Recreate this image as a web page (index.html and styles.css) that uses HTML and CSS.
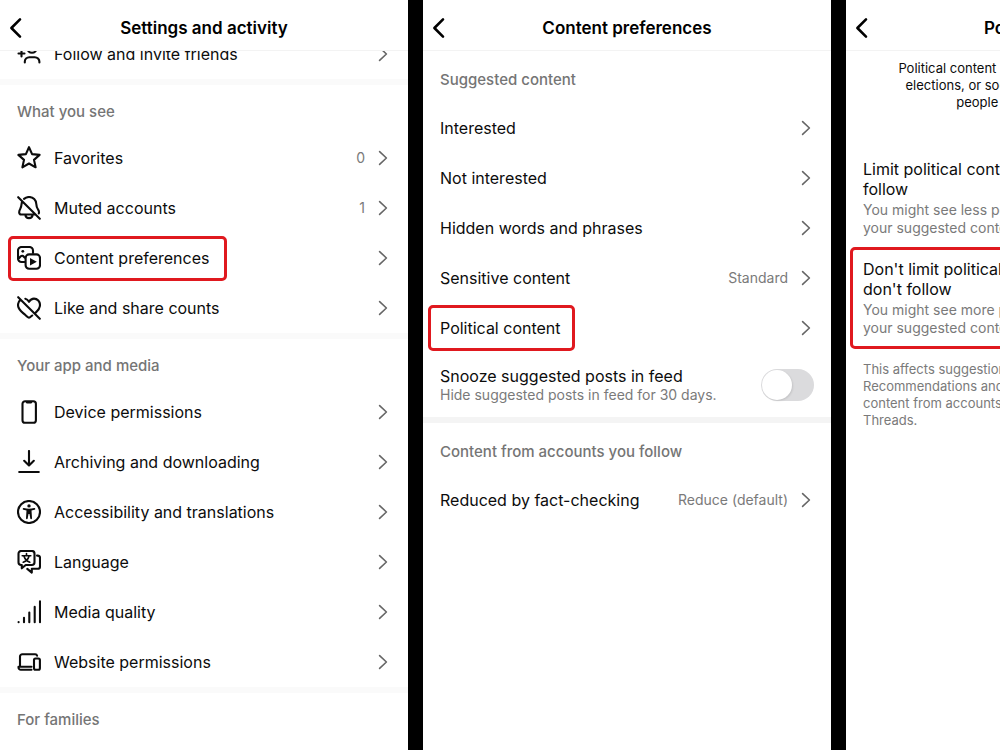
FILE: index.html
```html
<!DOCTYPE html>
<html lang="en">
<head>
    <meta charset="UTF-8">
    <meta name="viewport" content="width=device-width, initial-scale=1.0">
    <title>Settings and activity</title>
    <link rel="stylesheet" href="styles.css">
</head>
<body>

    <!-- Shared chevrons -->
    <svg class="sprite" aria-hidden="true">
        <symbol id="chevron" viewBox="0 0 16 16">
            <path d="M4.6 1.6 11.4 8l-6.8 6.4"/>
        </symbol>
        <symbol id="back" viewBox="0 0 14 22">
            <path d="M12 2.4 3.4 11l8.600 8.600"/>
        </symbol>
    </svg>

    <div class="screens">

        <!-- Settings and activity -->
        <section class="screen">
            <header class="top-bar">
                <button class="back-button" aria-label="Back"><svg><use href="#back"/></svg></button>
                <h1>Settings and activity</h1>
            </header>
            <div class="scroll-area">
                <ul class="list scrolled">
                    <li><a class="row" href="#invite">
                        <span class="row-main">
                            <svg class="icon" viewBox="0 0 24 24"><circle cx="15" cy="6.2" r="4.6"/><path d="M7.800 20.500v-.7a4.600 4.600 0 0 1 4.600-4.600h5.400a4.600 4.600 0 0 1 4.600 4.600v.7M1.500 11.500h6M4.500 8.500v6"/></svg>
                            Follow and invite friends
                        </span>
                        <svg class="chevron"><use href="#chevron"/></svg>
                    </a></li>
                </ul>

                <div class="group">
                    <h2>What you see</h2>
                    <ul class="list">
                        <li><a class="row" href="#favorites">
                            <span class="row-main">
                                <svg class="icon" viewBox="0 0 24 24"><path d="M12 1.200l3.100 6.900 7.500.8-5.600 5 1.600 7.400-6.600-3.800-6.600 3.800L7 13.900l-5.600-5 7.500-.8z"/></svg>
                                Favorites
                            </span>
                            <span class="value">0</span>
                            <svg class="chevron"><use href="#chevron"/></svg>
                        </a></li>
                        <li><a class="row" href="#muted">
                            <span class="row-main">
                                <svg class="icon" viewBox="0 0 24 24"><path d="M1.2 1.2l21.6 21.6M7 2.900C8.400 1.700 10.200 1 12 1c4.300 0 7.200 3.200 7.300 7 .1 2.700.6 3.900 1.800 5.600.9 1.300 1.100 2.700.7 3.900M4.800 6.500c-.3 3-.4 4.600-1.700 6.700-1.300 2.100-1.400 5.300 1 5.300h13.500M8.400 18.700c.2 4.600 7 4.600 7.200 0"/></svg>
                                Muted accounts
                            </span>
                            <span class="value">1</span>
                            <svg class="chevron"><use href="#chevron"/></svg>
                        </a></li>
                        <li><a class="row" href="#content">
                            <span class="row-main marked">
                                <svg class="icon" viewBox="0 0 24 24"><path d="M7.500 16H4.500A3.500 3.500 0 0 1 1 12.500v-8A3.500 3.500 0 0 1 4.500 1h8A3.500 3.500 0 0 1 16 4.500v2.500M1.500 12.800l2.300-2.500c.9-.9 2-.8 2.800.2l1 1.200"/><rect x="8.600" y="8.400" width="14.400" height="14.400" rx="3.500"/><circle class="solid" cx="5.800" cy="5.300" r="1.400"/><path class="solid" d="M13 12l6.800 3.700-6.800 3.800z"/></svg>
                                Content preferences
                            </span>
                            <svg class="chevron"><use href="#chevron"/></svg>
                        </a></li>
                        <li><a class="row" href="#likes">
                            <span class="row-main">
                                <svg class="icon" viewBox="0 0 24 24"><path d="M1.200 1.200l21.600 21.600M8.300 2.700c1.500.3 2.700 1.400 3.700 3.100 1.300-2.100 2.900-3.200 5-3.200 3.400 0 6 2.800 6 6.500 0 3.100-1.900 5.300-4.100 7.300M3.200 4.100C1.800 5.300 1 7 1 9.100c0 4.500 4 6.900 7.100 9.700 2.300 2.100 3.300 2.900 3.900 2.900s1.400-.7 3.200-2.200"/></svg>
                                Like and share counts
                            </span>
                            <svg class="chevron"><use href="#chevron"/></svg>
                        </a></li>
                    </ul>
                </div>

                <div class="group">
                    <h2>Your app and media</h2>
                    <ul class="list">
                        <li><a class="row" href="#device">
                            <span class="row-main">
                                <svg class="icon" viewBox="0 0 24 24"><rect x="5.500" y="1.200" width="13.400" height="21.600" rx="2.600"/><path class="solid" d="M8.500 1.500h7c-.3 1.500-1 2-1.800 2h-3.400c-.8 0-1.500-.5-1.800-2z"/></svg>
                                Device permissions
                            </span>
                            <svg class="chevron"><use href="#chevron"/></svg>
                        </a></li>
                        <li><a class="row" href="#archive">
                            <span class="row-main">
                                <svg class="icon" viewBox="0 0 24 24"><path d="M12 1v14.200M7.200 10.800l4.800 4.700 4.800-4.700M2.200 22h19.600"/></svg>
                                Archiving and downloading
                            </span>
                            <svg class="chevron"><use href="#chevron"/></svg>
                        </a></li>
                        <li><a class="row" href="#accessibility">
                            <span class="row-main">
                                <svg class="icon" viewBox="0 0 24 24"><circle cx="12" cy="12" r="11"/><circle class="solid" cx="12" cy="5.900" r="1.700"/><path class="solid" d="M6.800 8.100c3.500.7 6.900.7 10.400 0 1.200-.2 1.500 1.400.4 1.700l-3.100.8.500 7.600c0 1.200-1.500 1.300-1.700.2l-.8-4.400h-1l-.8 4.400c-.2 1.100-1.700 1-1.700-.2l.5-7.600-3.100-.8c-1.100-.3-.8-1.900.4-1.700z"/></svg>
                                Accessibility and translations
                            </span>
                            <svg class="chevron"><use href="#chevron"/></svg>
                        </a></li>
                        <li><a class="row" href="#language">
                            <span class="row-main">
                                <svg class="icon" viewBox="0 0 24 24"><path d="M4.200 1h10.600A2.700 2.700 0 0 1 17.500 3.700v8.600a2.700 2.700 0 0 1-2.700 2.700H8.700l-3.900 3.300V15h-.6a2.700 2.700 0 0 1-2.700-2.700V3.700A2.700 2.700 0 0 1 4.200 1zM20 5.600h.7A2.300 2.300 0 0 1 23 7.900v8.600a2.300 2.300 0 0 1-2.300 2.300h-5.900v3.800l-4.500-3.700"/><path class="thin" d="M9.500 3.600v2M5.200 5.800h8.600M12 6.200c-.7 2.700-2.600 4.800-5.800 6M7 6.200c.8 2.700 2.600 4.800 5.800 6"/></svg>
                                Language
                            </span>
                            <svg class="chevron"><use href="#chevron"/></svg>
                        </a></li>
                        <li><a class="row" href="#quality">
                            <span class="row-main">
                                <svg class="icon" viewBox="0 0 24 24"><path d="M1.600 22.100v.1M7 22.200v-4.500M12.300 22.200V12.500M17.700 22.200V6.900M23 22.200V1.400"/></svg>
                                Media quality
                            </span>
                            <svg class="chevron"><use href="#chevron"/></svg>
                        </a></li>
                        <li><a class="row" href="#website">
                            <span class="row-main">
                                <svg class="icon" viewBox="0 0 24 24"><path d="M3 16.800V6.500A2.300 2.300 0 0 1 5.300 4.200h12.800a2 2 0 0 1 2 1.500M14.500 16.800H1.500v.7a2.300 2.300 0 0 0 2.300 2.300h10.700"/><rect x="17" y="8.500" width="5.900" height="11.300" rx="1.500"/></svg>
                                Website permissions
                            </span>
                            <svg class="chevron"><use href="#chevron"/></svg>
                        </a></li>
                    </ul>
                </div>

                <div class="group">
                    <h2>For families</h2>
                </div>
            </div>
        </section>

        <!-- Content preferences -->
        <section class="screen roomy">
            <header class="top-bar">
                <button class="back-button" aria-label="Back"><svg><use href="#back"/></svg></button>
                <h1>Content preferences</h1>
            </header>
            <div class="scroll-area">
                <div class="group">
                    <h2>Suggested content</h2>
                    <ul class="list">
                        <li><a class="row" href="#interested">
                            <span class="row-main">Interested</span>
                            <svg class="chevron"><use href="#chevron"/></svg>
                        </a></li>
                        <li><a class="row" href="#not-interested">
                            <span class="row-main">Not interested</span>
                            <svg class="chevron"><use href="#chevron"/></svg>
                        </a></li>
                        <li><a class="row" href="#hidden-words">
                            <span class="row-main">Hidden words and phrases</span>
                            <svg class="chevron"><use href="#chevron"/></svg>
                        </a></li>
                        <li><a class="row" href="#sensitive">
                            <span class="row-main">Sensitive content</span>
                            <span class="value">Standard</span>
                            <svg class="chevron"><use href="#chevron"/></svg>
                        </a></li>
                        <li><a class="row" href="#political">
                            <span class="row-main marked">Political content</span>
                            <svg class="chevron"><use href="#chevron"/></svg>
                        </a></li>
                        <li class="row tall">
                            <label class="row-text" for="snooze">
                                <span class="title">Snooze suggested posts in feed</span>
                                <span class="note">Hide suggested posts in feed for 30 days.</span>
                            </label>
                            <input class="switch" type="checkbox" id="snooze">
                        </li>
                    </ul>
                </div>

                <div class="group">
                    <h2>Content from accounts you follow</h2>
                    <ul class="list">
                        <li><a class="row" href="#fact-checking">
                            <span class="row-main">Reduced by fact-checking</span>
                            <span class="value">Reduce (default)</span>
                            <svg class="chevron"><use href="#chevron"/></svg>
                        </a></li>
                    </ul>
                </div>
            </div>
        </section>

        <!-- Political content -->
        <section class="screen">
            <header class="top-bar">
                <button class="back-button" aria-label="Back"><svg><use href="#back"/></svg></button>
                <h1>Political content</h1>
            </header>
            <div class="scroll-area">
                <p class="intro">Political content is likely to mention governments,<br>elections, or social topics that affect a group of<br>people and/or society at large.</p>
                <label class="option">
                    <span class="row-text">
                        <span class="title">Limit political content from people you don't<br>follow</span>
                        <span class="note">You might see less political or social topics in<br>your suggested content.</span>
                    </span>
                    <input type="radio" name="political">
                </label>
                <label class="option marked">
                    <span class="row-text">
                        <span class="title">Don't limit political content from people you<br>don't follow</span>
                        <span class="note">You might see more political or social topics in<br>your suggested content.</span>
                    </span>
                    <input type="radio" name="political" checked>
                </label>
                <p class="footnote">This affects suggestions in Explore, Reels, Feed<br>Recommendations and Suggested Users. It includes<br>content from accounts you don't follow and<br>Threads.</p>
            </div>
        </section>

    </div>

</body>
</html>
```
FILE: styles.css
```css
/* General Reset */
* {
    margin: 0;
    padding: 0;
    box-sizing: border-box;
}

body {
    font-family: Inter, 'Liberation Sans', sans-serif;
    font-size: 16px;
    line-height: 20px;
    color: #0c0c0c;
    background-color: #000;
    overflow-x: hidden;
}

ul {
    list-style: none;
}

.sprite {
    display: none;
}

/* Three phone screens side by side, the last one runs off the edge */
.screens {
    display: flex;
    gap: 15px;
    min-height: 100vh;
    overflow: hidden;
}

.screen {
    flex: 0 0 40.8%;
    background-color: #fff;
}

.top-bar {
    display: flex;
    align-items: center;
    justify-content: center;
    position: relative;
    height: 51px;
    padding-top: 6px;
    border-bottom: 1px solid #f3f3f3;
}

.top-bar h1 {
    font-size: 17px;
    font-weight: 600;
    color: #000;
}

.back-button {
    position: absolute;
    left: 8px;
    top: 17px;
    width: 14px;
    height: 22px;
    border: none;
    background: none;
    cursor: pointer;
}

.back-button svg {
    display: block;
    width: 14px;
    height: 22px;
    fill: none;
    stroke: #000;
    stroke-width: 2.6;
    stroke-linecap: round;
    stroke-linejoin: round;
}

.scroll-area {
    overflow: hidden;
}

.scrolled {
    margin-top: -22px;
}

/* Groups and rows */
.group h2 {
    padding: 17px 17px 11px;
    font-size: 15px;
    font-weight: 500;
    color: #757575;
}

.roomy .group h2 {
    padding-top: 19px;
    padding-bottom: 13px;
}

.list + .group,
.group + .group {
    border-top: 6px solid #fafafa;
}

.roomy .group + .group {
    border-top-color: #f4f4f4;
}

.row {
    display: flex;
    align-items: center;
    height: 50px;
    padding: 0 17px;
    color: inherit;
    text-decoration: none;
}

.row.tall {
    height: 64px;
}

.row-main {
    display: flex;
    align-items: center;
    gap: 13px;
    position: relative;
    margin-right: auto;
    white-space: nowrap;
}

.icon {
    width: 24px;
    height: 24px;
    fill: none;
    stroke: #0c0c0c;
    stroke-width: 2.1;
    stroke-linecap: round;
    stroke-linejoin: round;
}

.icon .solid {
    fill: #0c0c0c;
    stroke: none;
}

.icon .thin {
    stroke-width: 1.6;
}

.value {
    margin-right: 10px;
    font-size: 14px;
    color: #7a7a7a;
}

.chevron {
    width: 16px;
    height: 16px;
    fill: none;
    stroke: #666;
    stroke-width: 1.6;
    stroke-linecap: round;
    stroke-linejoin: round;
}

.row-text {
    flex: 1;
    white-space: nowrap;
}

.title,
.note {
    display: block;
}

.note {
    font-size: 14px;
    line-height: 18px;
    color: #7a7a7a;
}

/* Toggle */
.switch {
    appearance: none;
    width: 53px;
    height: 32px;
    padding: 1px;
    border-radius: 16px;
    background-color: #dbdbdd;
    cursor: pointer;
}

.switch::before {
    content: '';
    display: block;
    width: 30px;
    height: 30px;
    border-radius: 50%;
    background-color: #fff;
    box-shadow: 1px 1px 2px rgba(0, 0, 0, 0.1);
}

.switch:checked::before {
    margin-left: 21px;
}

/* Red highlight box drawn over a row */
.marked::after {
    content: '';
    position: absolute;
    inset: -10px -18px -11px -9px;
    border: 3px solid #e0191f;
    border-radius: 5px;
    pointer-events: none;
}

.roomy .marked::after {
    inset: -13px -14px -13px -12px;
}

.option.marked::after {
    inset: -1px 4px -1px 4px;
}

/* Political content screen */
.intro {
    padding: 9px 17px 37px;
    font-size: 13px;
    line-height: 17px;
    text-align: center;
    white-space: nowrap;
}

.option {
    display: flex;
    align-items: center;
    position: relative;
    padding: 11px 17px;
}

.option .note {
    margin-top: 2px;
}

.option input {
    width: 20px;
    height: 20px;
}

.footnote {
    padding: 13px 17px;
    font-size: 13px;
    line-height: 17px;
    color: #7a7a7a;
    white-space: nowrap;
}
```
